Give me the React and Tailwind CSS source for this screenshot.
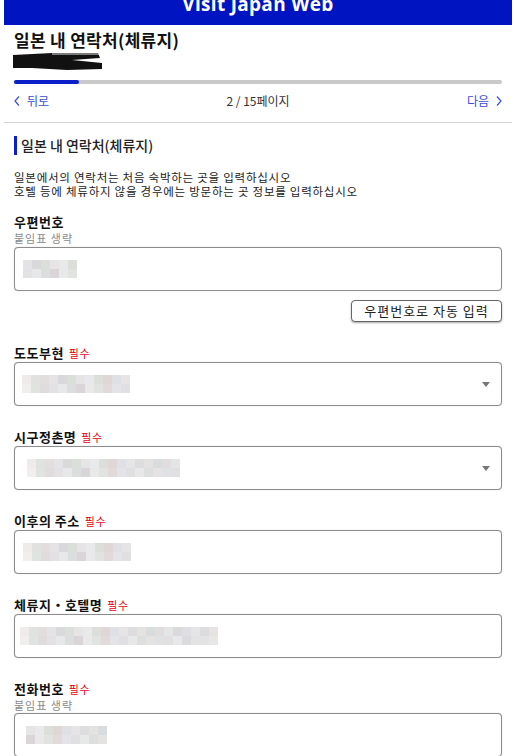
const kr = { fontFamily: '"Noto Sans CJK KR", "Noto Sans", sans-serif' };

const blurPalette = [
  ["#efebeb", "#dfe2df", "#e2dede", "#e4e4e6", "#d9d9db", "#dadfda", "#e6e4e4", "#e8e9ea", "#dcdeda", "#e0d6d6", "#dfe0e6", "#e6e4e4", "#dddddf", "#e4e1e1", "#d9dcdc", "#e1dcde", "#e3e5e7", "#dbdada", "#e0dde3", "#e5e5e5", "#dcdcdf", "#e7e3e3"],
  ["#f1efee", "#e0e4e0", "#e0dcdd", "#e3e1e3", "#e7e8ea", "#dcdddd", "#dad5d9", "#e9e9ea", "#e1e3e1", "#e2dada", "#e4e4e8", "#e0dfe2", "#e9e8e8", "#dcdfdd", "#e5e2e2", "#dfe1e4", "#e2dfe0", "#e8e8ea", "#dbdbdd", "#e5e2e5", "#e3e3e3", "#e9e6e6"],
];

function Blur({ cells, offset = 0 }) {
  return (
    <div className="flex flex-col">
      {blurPalette.map((row, r) => (
        <div key={r} className="flex">
          {Array.from({ length: cells }).map((_, i) => (
            <div
              key={i}
              className="h-[9px] w-[9px]"
              style={{ backgroundColor: row[(i + offset) % row.length] }}
            />
          ))}
        </div>
      ))}
    </div>
  );
}

function Required() {
  return <span className="ml-[5px] text-[11px] font-normal tracking-[0.5px] text-[#e60012]">필수</span>;
}

function Label({ children, required, hint }) {
  return (
    <div>
      <p className="text-[13px] font-bold leading-[18px] tracking-[0.5px] text-[#111]">
        {children}
        {required && <Required />}
      </p>
      {hint && <p className="text-[11px] leading-[15px] tracking-[1px] text-[#8a8a8a]">{hint}</p>}
    </div>
  );
}

function Box({ cells, pad, offset, select }) {
  return (
    <div className="flex h-[44px] items-center justify-between rounded-[4px] border border-[#8c8c8c] bg-white shadow-[0_0_1px_rgba(0,0,0,0.3)]">
      <div style={{ paddingLeft: pad }}>
        <Blur cells={cells} offset={offset} />
      </div>
      {select && (
        <svg width="8" height="5" viewBox="0 0 8 5" className="mr-[11px]">
          <polygon points="0,0 8,0 4,5" fill="#777" />
        </svg>
      )}
    </div>
  );
}

export default function App() {
  return (
    <div className="min-h-screen bg-white" style={kr}>
      <div className="mx-[4px]">
        <header className="-mt-[17px] flex h-[42px] items-center justify-center bg-[#0014c2]">
          <span
            className="text-[19px] font-bold tracking-[0.3px] text-white"
            style={{ fontFamily: '"Open Sans", sans-serif' }}
          >
            Visit Japan Web
          </span>
        </header>

        <div className="px-[10px]">
          <h1 className="mt-[4px] text-[17px] font-bold leading-[22px] tracking-[0.3px] text-[#111]">일본 내 연락처(체류지)</h1>
          <svg width="92" height="20" viewBox="0 0 92 20" className="-ml-[2px] block">
            <path d="M1 4 L 40 2 L 86 2 L 88 7 L 60 9 L 90 12 L 90 18 L 55 19 L 20 17 L 1 17 Z" fill="#111" />
            <path d="M40 3 L 88 3" stroke="#e4e4e4" strokeWidth="1" />
          </svg>

          <div className="mt-[9px] h-[4px] w-full rounded-full bg-[#c8c8c8]">
            <div className="h-[4px] w-[65px] rounded-full bg-[#0a1fc8]" />
          </div>

          <nav className="mt-[8px] flex h-[18px] items-center justify-between text-[12px] leading-[18px]">
            <span className="flex items-center gap-[7px] text-[#3a4fd0]">
              <svg width="6" height="10" viewBox="0 0 6 10">
                <polyline points="5,0.5 1,5 5,9.5" stroke="#3a4fd0" strokeWidth="1.2" fill="none" />
              </svg>
              뒤로
            </span>
            <span className="text-[#333]">2 / 15페이지</span>
            <span className="flex items-center gap-[7px] text-[#3a4fd0]">
              다음
              <svg width="6" height="10" viewBox="0 0 6 10">
                <polyline points="1,0.5 5,5 1,9.5" stroke="#3a4fd0" strokeWidth="1.2" fill="none" />
              </svg>
            </span>
          </nav>
        </div>

        <div className="mt-[12px] h-px bg-[#d4d4d4]" />

        <main className="px-[10px] pt-[13px]">
          <div className="flex h-[19px] items-center">
            <div className="h-[19px] w-[3px] bg-[#0a1fc8]" />
            <h2 className="ml-[4px] text-[14px] font-medium leading-[19px] text-[#222]">일본 내 연락처(체류지)</h2>
          </div>

          <div className="mt-[15px] text-[11.5px] leading-[14px] tracking-[0.75px] text-[#222]">
            <p>일본에서의 연락처는 처음 숙박하는 곳을 입력하십시오</p>
            <p>호텔 등에 체류하지 않을 경우에는 방문하는 곳 정보를 입력하십시오</p>
          </div>

          <div className="mt-[15px]">
            <Label hint="붙임표 생략">우편번호</Label>
            <div className="mt-[1px]">
              <Box cells={6} pad={8} offset={3} />
            </div>
            <div className="mt-[9px] flex justify-end">
              <button className="h-[22px] w-[151px] rounded-[4px] border border-[#666] bg-white text-[13px] leading-[20px] tracking-[1px] text-[#222] shadow-[0_1px_2px_rgba(0,0,0,0.35)]">
                우편번호로 자동 입력
              </button>
            </div>
          </div>

          <div className="mt-[22px]">
            <Label required>도도부현</Label>
            <Box cells={12} pad={7} offset={0} select />
          </div>

          <div className="mt-[22px]">
            <Label required>시구정촌명</Label>
            <Box cells={17} pad={12} offset={0} select />
          </div>

          <div className="mt-[22px]">
            <Label required>이후의 주소</Label>
            <Box cells={12} pad={8} offset={0} />
          </div>

          <div className="mt-[22px]">
            <Label required>체류지・호텔명</Label>
            <Box cells={22} pad={5} offset={0} />
          </div>

          <div className="mt-[22px]">
            <Label required hint="붙임표 생략">전화번호</Label>
            <Box cells={9} pad={11} offset={6} />
          </div>
          <div className="h-[40px]" />
        </main>
      </div>
    </div>
  );
}
